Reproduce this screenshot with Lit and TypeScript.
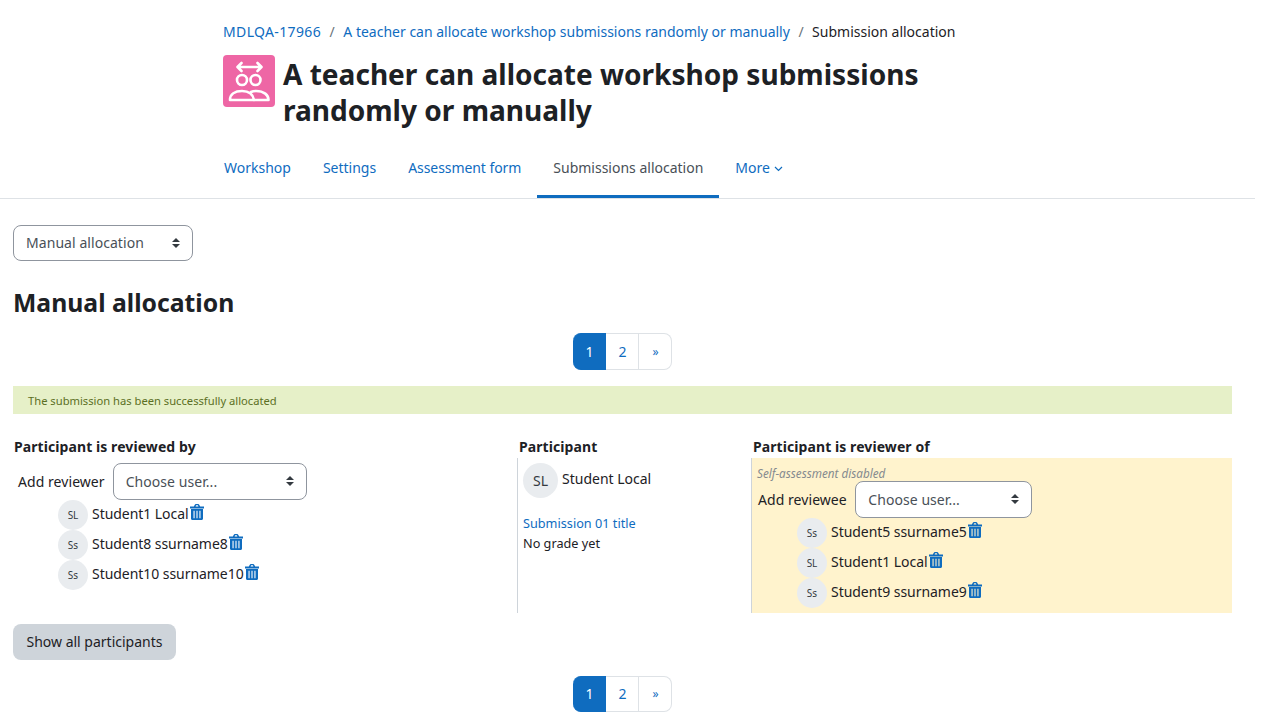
import { LitElement, html, css, svg } from "lit";
import { customElement } from "lit/decorators.js";

const trash = html`<svg class="trash" viewBox="0 0 14 16" aria-hidden="true"><path fill="currentColor" fill-rule="evenodd" d="M0 2.400h3.800L4.800.7C5 .3 5.400 0 5.900 0h2.200c.5 0 .9.3 1.100.7l1 1.700H14v2H0zM5.600 2.400h2.800L7.900 1.300H6.100zM1 5h12v9.500c0 .9-.6 1.500-1.400 1.500H2.400C1.600 16 1 15.400 1 14.500zM3.500 6.800v7.400h1.100V6.800zM6.450 6.800v7.400h1.100V6.800zM9.400 6.800v7.400h1.100V6.800z"/></svg>`;

const person = (initials: string, name: string) => html`
  <div class="person">
    <span class="avatar">${initials}</span><span class="pname">${name}</span><a class="del" href="#">${trash}</a>
  </div>`;

const pager = () => html`
  <nav class="pager">
    <a class="page on" href="#">1</a><a class="page" href="#">2</a><a class="page last" href="#">»</a>
  </nav>`;

@customElement("app-root")
export class AppRoot extends LitElement {
  static styles = css`
    :host {
      display: block;
      width: 1255px;
      height: 727px;
      overflow: hidden;
      background: #fff;
      color: #1d2125;
      font-family: "Noto Sans", sans-serif;
      font-size: 14px;
      line-height: 22px;
    }
    a { color: #0f6cbf; text-decoration: none; }
    .head { padding: 21px 0 0 223px; }
    .crumbs { display: flex; height: 22px; align-items: center; gap: 8.500px; }
    .crumbs .sep { color: #6a737b; }
    .crumbs .code { letter-spacing: .36px; }
    .title { display: flex; width: 760px; margin-top: 12px; gap: 8px; }
    .modicon { width: 52px; height: 52px; flex: none; border-radius: 4px; background: #ee66a5; }
    h1 { margin: 1px 0 0; font-size: 28.050px; line-height: 36px; font-weight: 700; }
    .tabs { display: flex; height: 53px; margin-top: 17px; padding-left: 208px; border-bottom: 1px solid #dee2e6; }
    .tab { display: flex; align-items: center; padding: 0 16px 4px; height: 46px; border-bottom: 3px solid transparent; }
    .tab.tight { letter-spacing: -.07px; }
    .tab.active { color: #495057; border-bottom-color: #0f6cbf; }
    .tab svg { width: 9px; height: 6px; margin-left: 4px; margin-top: 1px; }
    main { padding: 26px 23px 0 13px; }
    select {
      appearance: none;
      display: block;
      font: inherit;
      color: #495057;
      background: #fff url("data:image/svg+xml,%3csvg xmlns='http://www.w3.org/2000/svg' viewBox='0 0 4 5'%3e%3cpath fill='%23343a40' d='M2 0L0 2h4zm0 5L0 3h4z'/%3e%3c/svg%3e") no-repeat right 12px center / 8px 10px;
      border: 1px solid #8f959e;
      border-radius: 8px;
      padding: 0 28px 0 12px;
      height: 36px;
      letter-spacing: .06px;
    }
    .mode { width: 180px; }
    h2 { margin: 26px 0 0; font-size: 24.750px; line-height: 32px; font-weight: 700; }
    .pager { display: flex; justify-content: center; height: 37px; margin-top: 14px; }
    .page { display: flex; align-items: center; justify-content: center; width: 33px; height: 37px; box-sizing: border-box; padding-left: 1px; border: 1px solid #dee2e6; border-left-width: 0; background: #fff; }
    .page.on { background: #0f6cbf; border-color: #0f6cbf; color: #fff; border-radius: 8px 0 0 8px; }
    .page.last { border-radius: 0 8px 8px 0; font-size: 12px; }
    .notice { margin-top: 16px; height: 28px; padding: 0 15px; background: #e6f0c8; color: #5b6f24; font-size: 11.200px; line-height: 29px; }
    .grid { display: grid; grid-template-columns: 504px 234px 481px; margin-top: 22px; }
    .th { height: 22px; font-weight: 700; padding-left: 1px; line-height: 22px; letter-spacing: .08px; }
    .th.t2 { padding-left: 2px; }
    .th.t3 { padding-left: 2px; }
    .cell { height: 155px; box-sizing: border-box; }
    .c2, .c3 { border-left: 1px solid #ced4da; padding-left: 5px; }
    .c3 { background: #fff3cd; }
    .adder { display: flex; align-items: center; gap: 8px; padding-left: 5px; height: 38px; letter-spacing: .06px; }
    .adder span { padding-top: 2px; }
    .c1 .adder { margin-top: 4px; }
    .c3 .adder { margin-top: 1px; padding-left: 1px; gap: 8.500px; }
    .c1 select { width: 194px; height: 37px; padding-top: 2px; }
    .c3 select { width: 177px; height: 37px; padding-top: 2px; }
    .people { display: flex; flex-direction: column; }
    .c1 .people { margin: 0 0 0 45px; }
    .c3 .people { margin: 0 0 0 40px; }
    .person { display: flex; align-items: flex-start; height: 30px; }
    .avatar { display: flex; align-items: center; justify-content: center; flex: none; width: 30px; height: 30px; border-radius: 50%; background: #e9ecef; color: #343a40; font-size: 10px; margin-right: 4px; }
    .pname { line-height: 28px; letter-spacing: -.05px; }
    .trash { display: block; width: 14px; height: 16px; margin: 4px 0 0 1.500px; color: #0f6cbf; }
    .del { display: block; }
    .self { font-size: 11.700px; line-height: 18px; height: 17px; margin-top: 6px; margin-bottom: -2px; font-style: italic; color: #858a8f; }
    .me { display: flex; padding: 5px 0 0; }
    .me .avatar { width: 35px; height: 35px; font-size: 14px; }
    .me .nm { line-height: 32px; }
    .sub { margin-top: 15px; font-size: 12.700px; line-height: 20px; }
    .sub2 { font-size: 12.700px; line-height: 20px; }
    .btn { display: block; height: 36px; width: 163px; margin-top: 11px; border: 0; border-radius: 8px; background: #ced4da; color: #1d2125; font: inherit; padding: 0; }
    .pager.bot { margin-top: 16px; height: 36px; }
    .pager.bot .page { height: 36px; }
  `;

  render() {
    return html`
      <header class="head">
        <div class="crumbs">
          <a class="code" href="#">MDLQA-17966</a><span class="sep">/</span>
          <a href="#">A teacher can allocate workshop submissions randomly or manually</a><span class="sep">/</span>
          <span>Submission allocation</span>
        </div>
        <div class="title">
          <div class="modicon">
            <svg width="52" height="52" viewBox="0 0 52 52" fill="none" stroke="#fff" stroke-width="2.600" stroke-linecap="round" stroke-linejoin="round">
              ${svg`<path d="M15 12 H38 M18.500 8 L14.500 12 L18.500 16 M34.500 8 L38.500 12 L34.500 16"/>
              <circle cx="19" cy="25" r="5"/><circle cx="32.500" cy="25" r="5"/>
              <path d="M7 45 C7 39 12 36 19 36 C26 36 30 39 31 45 Z"/><path d="M28 37 C30 36 31 36 33 36 C41 36 45.500 40 45.500 45 H31"/>`}
            </svg>
          </div>
          <h1>A teacher can allocate workshop submissions randomly or manually</h1>
        </div>
      </header>
      <nav class="tabs">
        <a class="tab" href="#">Workshop</a>
        <a class="tab" href="#">Settings</a>
        <a class="tab tight" href="#">Assessment form</a>
        <a class="tab active" href="#">Submissions allocation</a>
        <a class="tab" href="#">More<svg viewBox="0 0 9 6" fill="none" stroke="currentColor" stroke-width="1.200"><path d="M1 1l3.500 3.500L8 1"/></svg></a>
      </nav>
      <main>
        <select class="mode"><option>Manual allocation</option></select>
        <h2>Manual allocation</h2>
        ${pager()}
        <div class="notice">The submission has been successfully allocated</div>
        <div class="grid">
          <div class="th">Participant is reviewed by</div>
          <div class="th t2">Participant</div>
          <div class="th t3">Participant is reviewer of</div>
          <div class="cell c1">
            <div class="adder"><span>Add reviewer</span><select><option>Choose user...</option></select></div>
            <div class="people">
              ${person("SL", "Student1 Local")}
              ${person("Ss", "Student8 ssurname8")}
              ${person("Ss", "Student10 ssurname10")}
            </div>
          </div>
          <div class="cell c2">
            <div class="me"><span class="avatar">SL</span><span class="nm">Student Local</span></div>
            <div class="sub"><a href="#">Submission 01 title</a></div>
            <div class="sub2">No grade yet</div>
          </div>
          <div class="cell c3">
            <div class="self">Self-assessment disabled</div>
            <div class="adder"><span>Add reviewee</span><select><option>Choose user...</option></select></div>
            <div class="people">
              ${person("Ss", "Student5 ssurname5")}
              ${person("SL", "Student1 Local")}
              ${person("Ss", "Student9 ssurname9")}
            </div>
          </div>
        </div>
        <button class="btn">Show all participants</button>
        <div class="pager bot">
          <a class="page on" href="#">1</a><a class="page" href="#">2</a><a class="page last" href="#">»</a>
        </div>
      </main>
    `;
  }
}
